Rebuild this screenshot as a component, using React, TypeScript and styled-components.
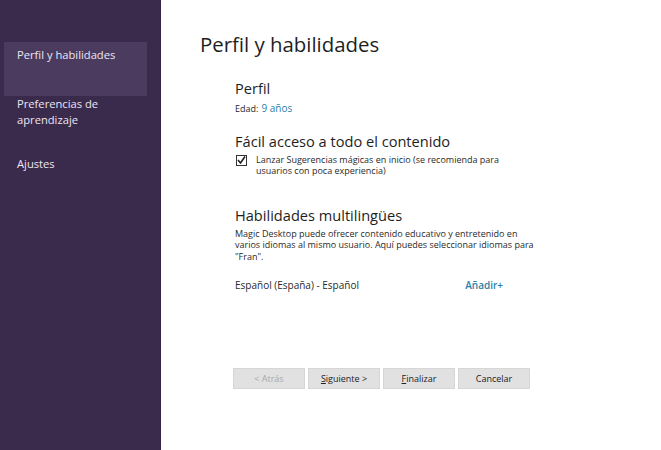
import React from "react";
import styled, { createGlobalStyle } from "styled-components";

const Global = createGlobalStyle`
  html, body { margin: 0; padding: 0; background: #fff; }
  body { font-family: "Open Sans", "Noto Sans", sans-serif; }
`;

const Shell = styled.div`
  display: flex;
  width: 661px;
  height: 450px;
  overflow: hidden;
`;

const Sidebar = styled.nav`
  width: 161px;
  flex-shrink: 0;
  background: #3a2a4c;
  border-right: 1px solid #33244a;
  box-sizing: border-box;
  padding: 42px 13px 0 4px;
  display: flex;
  flex-direction: column;
`;

const NavItem = styled.div<{ $active?: boolean }>`
  background: ${(p) => (p.$active ? "#4b3b5f" : "transparent")};
  color: #ece6f2;
  font-size: 11.2px;
  line-height: 16px;
  padding: ${(p) => (p.$active ? "5px 13px" : "0 13px")};
  height: ${(p) => (p.$active ? "54px" : "auto")};
  box-sizing: border-box;
  margin-bottom: ${(p) => (p.$active ? "0" : "28px")};
`;

const Main = styled.main`
  flex: 1;
  padding: 30px 0 0 39px;
  display: flex;
  flex-direction: column;
  color: #222;
`;

const Title = styled.h1`
  margin: 0;
  font-weight: 400;
  font-size: 20.4px;
  line-height: 28px;
  color: #1e1e1e;
`;

const Content = styled.div`
  margin-left: 35px;
  width: 300px;
  display: flex;
  flex-direction: column;
`;

const SectionTitle = styled.h2<{ $top: number }>`
  margin: ${(p) => p.$top}px 0 0 0;
  font-weight: 400;
  font-size: 14.6px;
  line-height: 20px;
  color: #1e1e1e;
`;

const Small = styled.div`
  font-size: 9px;
  line-height: 11.5px;
  color: #2a2a2a;
`;

const Age = styled(Small)`
  margin-top: 5px;
`;

const Blue = styled.span`
  color: #2b7fa6;
  font-size: 10px;
  margin-left: 3px;
`;

const CheckRow = styled.div`
  display: flex;
  gap: 9px;
  margin-top: 2px;
`;

const Label = styled(Small)`
  margin-top: 1px;
`;

const Box = styled.span`
  width: 11px;
  height: 11px;
  flex-shrink: 0;
  border: 1px solid #333;
  margin: 2px 0 0 1px;
  box-sizing: border-box;
  display: flex;
  align-items: center;
  justify-content: center;
`;

const Para = styled(Small)`
  margin-top: 3px;
`;

const LangRow = styled.div`
  display: flex;
  justify-content: space-between;
  align-items: center;
  margin-top: 16px;
  width: 268px;
  font-size: 10px;
  color: #2a2a2a;
`;

const AddLink = styled.span`
  color: #2b7fa6;
  font-weight: 600;
  font-size: 10px;
`;

const Buttons = styled.div`
  display: flex;
  gap: 3px;
  margin: auto 0 61px 33px;
`;

const Btn = styled.button<{ $disabled?: boolean }>`
  width: 72px;
  height: 21px;
  border: 1px solid #d6d6d6;
  background: #e1e1e1;
  font-family: inherit;
  font-size: 9px;
  color: ${(p) => (p.$disabled ? "#a8a8a8" : "#222")};
  padding: 0;
  u { text-decoration: underline; }
`;

export default function App() {
  return (
    <>
      <Global />
      <Shell>
        <Sidebar>
          <NavItem $active>Perfil y habilidades</NavItem>
          <NavItem>Preferencias de aprendizaje</NavItem>
          <NavItem>Ajustes</NavItem>
        </Sidebar>
        <Main>
          <Title>Perfil y habilidades</Title>
          <Content>
            <SectionTitle $top={20}>Perfil</SectionTitle>
            <Age>
              Edad:<Blue>9 años</Blue>
            </Age>
            <SectionTitle $top={16}>Fácil acceso a todo el contenido</SectionTitle>
            <CheckRow>
              <Box>
                <svg width="9" height="8" viewBox="0 0 9 8">
                  <path d="M1 4 L3.5 7 L8 0.5" fill="none" stroke="#222" strokeWidth="1.6" />
                </svg>
              </Box>
              <Label>
                Lanzar Sugerencias mágicas en inicio (se recomienda para usuarios con poca experiencia)
              </Label>
            </CheckRow>
            <SectionTitle $top={28}>Habilidades multilingües</SectionTitle>
            <Para>
              Magic Desktop puede ofrecer contenido educativo y entretenido en varios idiomas al mismo usuario. Aquí puedes seleccionar idiomas para "Fran".
            </Para>
            <LangRow>
              <span>Español (España) - Español</span>
              <AddLink>Añadir+</AddLink>
            </LangRow>
          </Content>
          <Buttons>
            <Btn $disabled>&lt; Atrás</Btn>
            <Btn>
              <u>S</u>iguiente &gt;
            </Btn>
            <Btn>
              <u>F</u>inalizar
            </Btn>
            <Btn>Cancelar</Btn>
          </Buttons>
        </Main>
      </Shell>
    </>
  );
}
